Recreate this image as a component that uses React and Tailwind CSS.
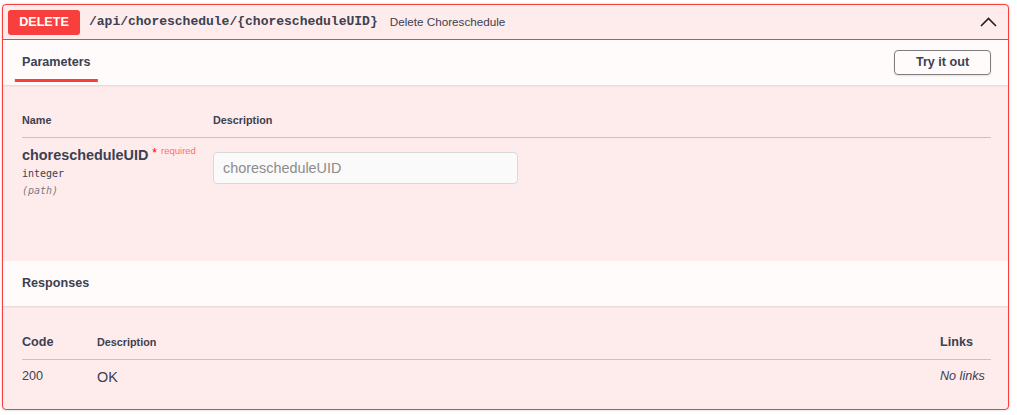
import React from "react";

const sans = { fontFamily: '"Liberation Sans", Arial, sans-serif' };

const ChevronUp = () => (
    <svg width="17" height="10" viewBox="0 0 17 10" fill="none">
        <polyline points="1,9 8.5,1.5 16,9" stroke="#1f1f1f" strokeWidth="1.6" />
    </svg>
);

export default function App() {
    return (
        <div className="bg-white min-h-screen pt-[4px] pl-[2px] text-[#3b4151]" style={sans}>
            <div className="w-[1007px] border border-[#f93e3e] rounded-[4px] bg-[#feebeb] shadow-[0_0_3px_rgba(0,0,0,0.19)] overflow-hidden">
                {/* Summary */}
                <div className="flex items-center h-[35px] pl-[5px] pr-[11px] border-b border-[#f93e3e]">
                    <div className="w-[72px] h-[25px] bg-[#f93e3e] rounded-[3px] text-white font-bold text-[12.6px] flex items-center justify-center">
                        DELETE
                    </div>
                    <span className="ml-[9px] font-bold text-[13px] font-['Liberation_Mono',monospace]">
                        /api/choreschedule/{"{"}chorescheduleUID{"}"}
                    </span>
                    <span className="ml-[12px] text-[11.7px]">Delete Choreschedule</span>
                    <div className="ml-auto flex items-center">
                        <ChevronUp />
                    </div>
                </div>

                {/* Parameters header */}
                <div className="flex items-center h-[45px] pl-[19px] pr-[17px] bg-[#fffbfb] shadow-[0_1px_2px_rgba(0,0,0,0.1)] relative">
                    <span className="relative font-bold text-[12.6px] leading-[15px]">
                        Parameters
                        <span className="absolute left-1/2 -translate-x-1/2 w-[120%] h-[3px] top-[calc(100%+9px)] bg-[#f93e3e]" />
                    </span>
                    <button className="ml-auto w-[97px] h-[25px] border border-[#7d7d7d] rounded-[4px] font-bold text-[12.6px] shadow-[0_1px_2px_rgba(0,0,0,0.1)]">
                        Try it out
                    </button>
                </div>

                {/* Parameters body */}
                <div className="h-[176px] pt-[28px] pl-[19px] pr-[17px]">
                    <div className="flex pb-[10px] border-b border-[#3b4151]/25 text-[10.8px] font-bold leading-[14px]">
                        <div className="w-[191px]">Name</div>
                        <div>Description</div>
                    </div>
                    <div className="flex pt-[8px]">
                        <div className="w-[191px]">
                            <div className="flex items-start leading-[18px]">
                                <span className="font-bold text-[14.4px]">chorescheduleUID</span>
                                <span className="ml-[4px] text-[12px] text-[#ff0000] leading-[14px]">*</span>
                                <span className="ml-[4px] text-[9.5px] text-[#ff6f6f] leading-[11px] mt-[-1px]">required</span>
                            </div>
                            <div className="mt-[1px] text-[10px] leading-[17px] font-['DejaVu_Sans_Mono',monospace]">integer</div>
                            <div className="text-[10px] leading-[17px] italic text-[#3b4151]/70 font-['DejaVu_Sans_Mono',monospace]">(path)</div>
                        </div>
                        <div className="pt-[6px]">
                            <input
                                placeholder="chorescheduleUID"
                                className="w-[305px] h-[32px] px-[9px] bg-[#fafafa] border border-[#d9d9d9] rounded-[4px] text-[14.4px] placeholder:text-[#8c8c8c] outline-none"
                                style={sans}
                            />
                        </div>
                    </div>
                </div>

                {/* Responses header */}
                <div className="flex items-center h-[45px] pl-[19px] bg-[#fffbfb] shadow-[0_1px_2px_rgba(0,0,0,0.1)] relative">
                    <span className="font-bold text-[12.6px]">Responses</span>
                </div>

                {/* Responses body */}
                <div className="h-[103px] pt-[29px] pl-[19px] pr-[17px]">
                    <div className="flex items-center pb-[9px] border-b border-[#3b4151]/25 leading-[15px]">
                        <div className="w-[75px] text-[12.6px] font-semibold">Code</div>
                        <div className="text-[10.8px] font-bold">Description</div>
                        <div className="ml-auto w-[51px] text-[12.6px] font-bold">Links</div>
                    </div>
                    <div className="flex items-start pt-[9px] leading-[15px]">
                        <div className="w-[75px] text-[12.6px]">200</div>
                        <div className="text-[14.4px] mt-[1px]">OK</div>
                        <div className="ml-auto w-[51px] text-[12.6px] italic">No links</div>
                    </div>
                </div>
            </div>
        </div>
    );
}
